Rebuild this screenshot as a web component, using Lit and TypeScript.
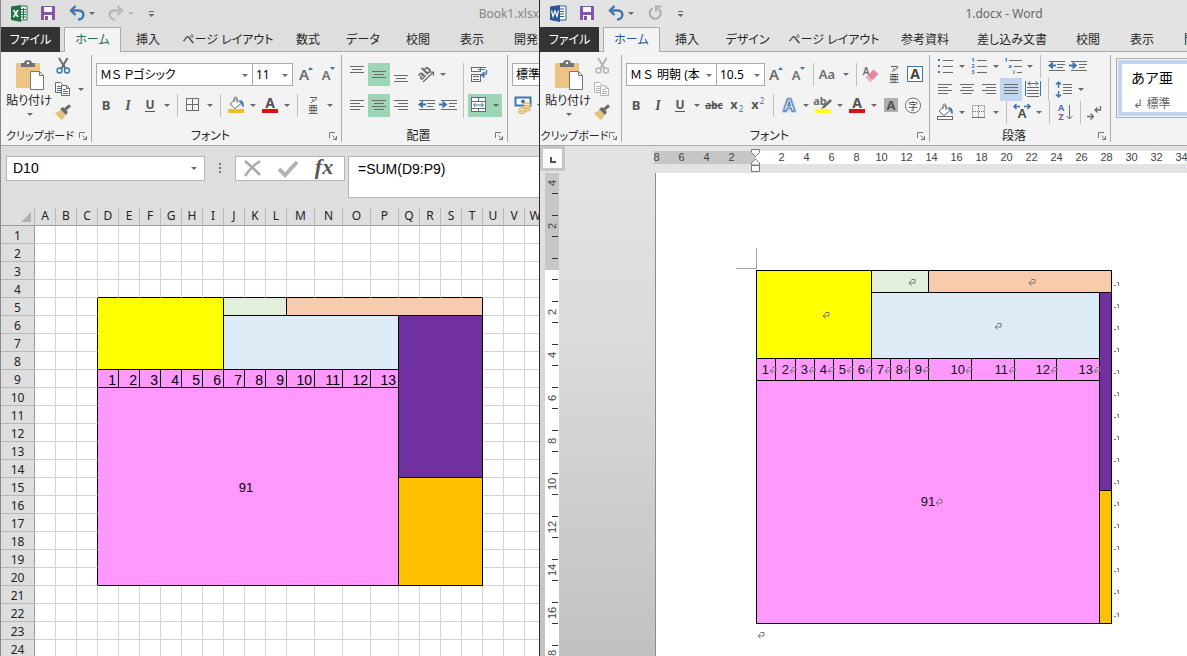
import { LitElement, html, svg, css, nothing } from "lit";
import { customElement } from "lit/decorators.js";
import { classMap } from "lit/directives/class-map.js";
import { styleMap } from "lit/directives/style-map.js";

const G = "#6b6b6b";
const B = "#3f75ad";

/* ---------- icon helpers ---------- */
const icon = (body: unknown, w = 22, h = 23) =>
  html`<svg width=${w} height=${h} viewBox="0 0 ${w} ${h}" fill="none" aria-hidden="true">${body}</svg>`;

const lines = (rows: [number, number, number][], color = G) =>
  rows.map(([x, y, w]) => svg`<rect x=${x} y=${y} width=${w} height="1" fill=${color} shape-rendering="crispEdges"/>`);

const caretShape = icon(svg`<path d="M3 10h6l-3 3z" fill="#6b6b6b"/>`, 12);

const tool = (label: string, body: unknown, extra = "") =>
  html`<button class="tool ${extra}" aria-label=${label}>${icon(body)}</button>`;
const caret = (label: string) => html`<button class="caret" aria-label=${label}>${caretShape}</button>`;
const sep = html`<span class="sep"></span>`;

const glyph = (t: string, size: number, x: number, y: number, color = G, extra = "") =>
  svg`<text x=${x} y=${y} font-size=${size} fill=${color} text-anchor="middle" class=${extra}>${t}</text>`;

const I = {
  top: lines([[4, 3, 14], [6, 6, 10], [4, 9, 14]]),
  middle: lines([[4, 8, 14], [6, 11, 10], [4, 14, 14]]),
  bottom: lines([[4, 12, 14], [6, 15, 10], [4, 18, 14]]),
  left: lines([[4, 6, 14], [4, 9, 10], [4, 12, 14], [4, 15, 10]]),
  center: lines([[4, 6, 14], [6, 9, 10], [4, 12, 14], [6, 15, 10]]),
  right: lines([[4, 6, 14], [8, 9, 10], [4, 12, 14], [8, 15, 10]]),
  justify: lines([[4, 6, 14], [4, 9, 14], [4, 12, 14], [4, 15, 14]]),
  distribute: svg`${lines([[5, 9, 12], [5, 12, 12], [5, 15, 12], [5, 18, 12]])}
    <path d="M3.500 3v15M18.500 3v15M6 5.500h10M8.500 3L6 5.500l2.500 2.500M13.500 3L16 5.500l-2.500 2.500" stroke=${B}/>`,
  dec: svg`${lines([[4, 6, 16], [12, 9, 8], [12, 12, 6], [4, 15, 16]])}
    <path d="M11 10.500H5" stroke=${B} stroke-width="2"/><path d="M8 6.500v8L3 10.500z" fill=${B}/>`,
  inc: svg`${lines([[4, 6, 16], [12, 9, 8], [12, 12, 6], [4, 15, 16]])}
    <path d="M2 10.500h5" stroke=${B} stroke-width="2"/><path d="M5.500 6.500v8l5-4z" fill=${B}/>`,
  orient: svg`<g transform="rotate(-45 9 11)">${glyph("ab", 12, 10, 14, G, "b")}</g>
    <path d="M8 19L18.500 9M14.500 9h4v4" stroke=${G} stroke-width="1.200"/>`,
  wrap: svg`<path d="M4 4.500h14" stroke=${G}/><rect x="3.500" y="4.500" width="9" height="4" stroke=${G}/>
    <rect x="3.500" y="11.500" width="9" height="7" stroke=${G}/><path d="M5 13.500h6M5 16.500h6" stroke=${G}/>
    <path d="M10 6.500h7" stroke=${B}/><path d="M18.500 7c.5 4-1 5-4 5M16.500 9l-3 3 3 2.500" stroke=${B} stroke-width="1.500"/>`,
  merge: svg`<rect x="3.500" y="3.500" width="14" height="14" fill="#fff" stroke=${G}/>
    <path d="M3.500 7.500h14M3.500 14.500h14M10.500 3.500v4M10.500 14.500v3" stroke=${G}/>
    <path d="M6 11h9M7.500 9L5.500 11l2 2M13.500 9l2 2-2 2" stroke=${B}/>`,
  borders: svg`<rect x="4.500" y="4.500" width="12" height="12" stroke=${G}/><path d="M10.500 5v12M5 10.500h12" stroke=${G}/>`,
  dotted: svg`<rect x="4.500" y="4.500" width="12" height="12" stroke=${G} stroke-dasharray="1 1"/>
    <path d="M10.500 5v12M5 10.500h12" stroke=${G} stroke-dasharray="1 1"/><path d="M4 16.500h13" stroke=${G}/>`,
  bucket: (c: string) => svg`<path d="M5 10L11 4.500l5 5-6 5z" fill="#fff" stroke=${G}/>
    <path d="M9 8V4.500a1.500 1.500 0 0 1 3 0V9" stroke=${G}/>
    <path d="M14 6c4 0 5.500 3 4.500 7.500-1.500-1-2-3-2.500-4.500z" fill=${B}/>
    <rect x="3.500" y="15.500" width="15" height="3" fill=${c} stroke=${c === "#fff" ? G : c}/>`,
  fontColor: svg`${glyph("A", 14, 11, 14, "#555", "b")}<rect x="3" y="15" width="16" height="4" fill="#e01010"/>`,
  hilite: svg`${glyph("ab", 11, 8, 11, G, "b")}<path d="M18 5l-7 7-2 3 3.500-1L20 7z" fill=${G}/>
    <rect x="3" y="15" width="16" height="4" fill="#ffff1a"/>`,
  ruby: svg`<path d="M8 3.500h6.500c0 2-1.500 3-3 4M11 5c0 2-.5 3-2 4" stroke="#555"/>${glyph("亜", 10, 11, 18.500, "#444")}`,
  grow: svg`${glyph("A", 15, 9, 17, G, "m")}<path d="M13 7h5l-2.500-3z" fill=${B}/>`,
  shrink: svg`${glyph("A", 13, 9, 17, G, "m")}<path d="M13 4h5l-2.500 3z" fill=${B}/>`,
  bold: glyph("B", 13, 11, 16, "#555", "b"),
  italic: glyph("I", 14, 11, 16, "#555", "i"),
  under: svg`${glyph("U", 12, 11, 15, "#555", "b")}<path d="M6 17.500h10" stroke="#555"/>`,
  strike: svg`${glyph("abc", 10, 11, 15, "#555", "b")}<path d="M2 11.500h18" stroke="#555"/>`,
  sub: svg`${glyph("x", 13, 9, 15, "#555", "b")}${glyph("2", 8, 16, 18, B)}`,
  sup: svg`${glyph("x", 13, 8, 15, "#555", "b")}${glyph("2", 8, 15, 10, B)}`,
  effects: svg`<text x="11" y="17" font-size="16" text-anchor="middle" class="b" fill="#fff" stroke="#a9cbee" stroke-width="3">A</text>
    <text x="11" y="17" font-size="16" text-anchor="middle" class="b" fill="#fff" stroke=${B} stroke-width="1">A</text>`,
  shade: svg`<rect x="4" y="4" width="14" height="14" fill="#b0b0b0"/>${glyph("A", 13, 11, 15.500, "#555", "b")}`,
  enclose: svg`<circle cx="11" cy="11.500" r="7.500" fill="#fff" stroke=${G}/>${glyph("字", 10, 11, 15.500, "#444")}`,
  caps: glyph("Aa", 13, 9, 16, G, "m"),
  eraser: svg`${glyph("A", 10, 5, 12, G, "m")}<path d="M4.500 14.500L12.500 6.500l5 4.500-8 8z" fill="#e2899b"/><path d="M4.500 14.500l5 4.500 2-2-5-4.500z" fill="#efb6c0"/>`,
  boxed: svg`<rect x="2.500" y="3.500" width="15" height="15" fill="#fff" stroke=${B}/>${glyph("A", 14, 10, 16, "#444", "b")}`,
  bullets: svg`<path d="M4 4h2v2H4zM4 10h2v2H4zM4 16h2v2H4z" fill=${B}/>${lines([[9, 5, 10], [9, 11, 10], [9, 17, 10]])}`,
  numbers: svg`${glyph("1", 6, 5, 7, B, "b")}${glyph("2", 6, 5, 13, B, "b")}${glyph("3", 6, 5, 19, B, "b")}${lines([[9, 5, 10], [9, 11, 10], [9, 17, 10]])}`,
  multi: svg`${glyph("1", 6, 4, 7, B, "b")}${glyph("a", 6, 8, 13, B, "b")}${glyph("i", 6, 12, 19, B, "b")}${lines([[7, 5, 13], [12, 11, 8], [15, 17, 5]])}`,
  spacing: svg`${lines([[10, 6, 9], [10, 9, 9], [10, 12, 9], [10, 15, 9]])}
    <path d="M5.500 4v6M5.500 13v6M3 6.500L5.500 4 8 6.500M3 16.500L5.500 19 8 16.500" stroke=${B} stroke-width="1.500"/>`,
  charScale: svg`${glyph("A", 13, 11, 17, "#444", "m")}<path d="M3 5.500h6M5.500 3L3 5.500 5.500 8M13 5.500h6M16.500 3L19 5.500 16.500 8" stroke=${B} stroke-width="1.500"/>`,
  sort: svg`${glyph("A", 9, 7, 10, B, "b")}${glyph("Z", 9, 7, 19, "#8455a3", "b")}<path d="M15.500 4v14M12.500 15l3 3 3-3" stroke=${G}/>`,
  marks: svg`<path d="M15.500 5v4H10M12.500 6.500L10 9l2.500 2.500M2 15.500h6M5.500 12.500l3 3-3 3" stroke=${G} stroke-width="1.300"/>`,
  cut: (c: string, d: string) => svg`<path d="M6 3l6.500 10.500M14.500 3L8.500 13.500" stroke=${d} stroke-width="2"/>
    <circle cx="6.500" cy="15.500" r="2.500" stroke=${c} stroke-width="1.400"/><circle cx="14" cy="15.500" r="2.500" stroke=${c} stroke-width="1.400"/>`,
  copy: (c: string, d: string) => svg`<path d="M2.500 4.500h5l2 2v8h-7z" fill="#fff" stroke=${d}/><path d="M4 8.500h4M4 10.500h4M4 12.500h4" stroke=${c}/>
    <path d="M8.500 7.500h5l3 3v7h-8z" fill="#fff" stroke=${d}/><path d="M13.500 7.500v3h3" stroke=${d}/><path d="M10 11.500h3M10 13.500h5M10 15.500h5" stroke=${c}/>`,
  brush: svg`<path d="M2 12l6-3 5 5-4 5c-1-1-2-1-2.500-2.500C4.500 16 3.500 14 2 12z" fill="#e8c07c"/>
    <path d="M7 8l3-2 5 5-2 3z" fill=${G}/><path d="M12 8.500l5-4" stroke=${G} stroke-width="3"/>`,
  money: svg`<rect x="3.500" y="3.500" width="15" height="8" fill="#fff" stroke=${B} stroke-width="2"/><circle cx="11" cy="7.500" r="2" fill=${B}/>
    <g fill="#f4e3c0" stroke="#d9a95a"><ellipse cx="15" cy="15.500" rx="3.500" ry="1.500"/><ellipse cx="15" cy="13" rx="3.500" ry="1.500"/><ellipse cx="15" cy="10.500" rx="3.500" ry="1.500"/><ellipse cx="10" cy="18" rx="3.500" ry="1.500"/><ellipse cx="10" cy="15.500" rx="3.500" ry="1.500"/></g>`,
};

const Q = {
  excel: icon(svg`<path d="M11 3h7v14h-7z" fill="#fff" stroke="#1f7244"/><path d="M12 6.500h5M12 9h5M12 11.500h5M12 14h5M14.500 5v11" stroke="#1f7244"/>
    <path d="M2 3.500L12 2v17L2 17z" fill="#1f7244"/><path d="M4.500 7l4.500 7M9 7l-4.500 7" stroke="#fff" stroke-width="1.600"/>`, 20, 21),
  word: icon(svg`<path d="M11 3h7v14h-7z" fill="#fff" stroke="#2a579a"/><path d="M12 6h4M12 8.500h4M12 11h4M12 13.500h4" stroke="#2a579a"/>
    <path d="M2 3.500L12 2v17L2 17z" fill="#2a579a"/><path d="M3.500 7.500l1.500 6L7 8l2 5.500 1.500-6" stroke="#fff" stroke-width="1.200"/>`, 20, 21),
  save: icon(svg`<path d="M3 3h14v14H3z" fill="#8455a3"/><path d="M6 4h8v5H6z" fill="#fff"/><path d="M6 12h8v5H6z" fill="#fff"/><path d="M7 13h3v4H7z" fill="#8455a3"/>`, 20, 21),
  undo: icon(svg`<path d="M5 7.500h7c6 0 6 9-1 9" stroke=${B} stroke-width="2.400"/><path d="M8.500 3L4 7.500 8.500 12" stroke=${B} stroke-width="2.400"/>`, 20, 21),
  redo: icon(svg`<path d="M15 7.500H8c-6 0-6 9 1 9" stroke="#b9b9b9" stroke-width="2.400"/><path d="M11.500 3L16 7.500 11.500 12" stroke="#b9b9b9" stroke-width="2.400"/>`, 20, 21),
  repeat: icon(svg`<path d="M7.500 5.500A5.500 5.500 0 1 0 13 5.500" stroke="#b0b0b0" stroke-width="2.200"/><path d="M11 8.500V3.500h5.500" stroke="#b0b0b0" stroke-width="2"/>`, 20, 21),
  caret: (c: string) => icon(svg`<path d="M2 9h6l-3 3z" fill=${c}/>`, 10, 21),
  custom: icon(svg`<path d="M4 8.500h5" stroke=${G}/><path d="M3.500 11h6l-3 3z" fill=${G}/>`, 12, 21),
};

const pasteIcon = icon(
  svg`<rect x="2" y="3" width="24" height="25" rx="1" fill="#ecc583"/><path d="M7 3h3c0-4 8-4 8 0h3v4H7z" fill="#737373"/><circle cx="14" cy="3" r="1.200" fill="#fff"/>
  <path d="M16.500 11.500h9l4 4v14h-13z" fill="#fff" stroke="#737373"/><path d="M25.500 11.500v4h4" stroke="#737373"/>`, 32, 31);

const launcher = html`<button class="launch" aria-label="詳細">${icon(
  svg`<path d="M.5 6V.5H6M3.500 3.500l4 4M7.500 4v3.500H4" stroke="#777"/>`, 8, 8)}</button>`;

const group = (cls: string, label: string, body: unknown) =>
  html`<section class="group ${cls}"><div class="body">${body}</div>
    <div class="foot"><span>${label}</span>${label ? launcher : nothing}</div></section>`;

const picker = (cls: string, label: string, value: string) =>
  html`<span class="picker ${cls}"><select aria-label=${label}><option>${value}</option></select><i>${caretShape}</i></span>`;

const clipboard = (cut: string, cutD: string, copy: string, copyD: string, withCaret: boolean) =>
  group("clip", "クリップボード", html`
    <button class="paste">${pasteIcon}<span>貼り付け</span>${icon(svg`<path d="M3 4h6l-3 3z" fill="#6b6b6b"/>`, 12, 9)}</button>
    <div class="rows tight">
      <div class="row">${tool("切り取り", I.cut(cut, cutD))}</div>
      <div class="row">${tool("コピー", I.copy(copy, copyD))}${withCaret ? caret("コピーのオプション") : nothing}</div>
      <div class="row">${tool("書式のコピー", I.brush)}</div>
    </div>`);

const tabStrip = (tabs: [string, number][]) =>
  html`<nav class="tabs"><button class="file">ファイル</button>${tabs.map(([t, w], i) =>
    html`<button class=${classMap({ tab: true, on: i === 0 })} style=${styleMap({ flexBasis: w + "px" })}>${t}</button>`)}</nav>`;

const chrome = css`
  * { box-sizing: border-box; }
  :host {
    display: flex; flex-direction: column; min-width: 0; min-height: 0; overflow: hidden;
    font: 12px/16px "Noto Sans", "Noto Sans CJK JP", sans-serif; color: #262626;
    font-feature-settings: "palt";
  }
  svg { display: block; flex: none; font-family: "Noto Sans", "Noto Sans CJK JP", sans-serif; }
  svg .b { font-weight: 700; }
  svg .m { font-weight: 600; }
  svg .i { font-weight: 700; font-style: italic; font-family: "Liberation Serif", serif; }
  button, select, input { font: inherit; color: inherit; font-feature-settings: inherit; border: 0; padding: 0; margin: 0; background: none; border-radius: 0; }
  button { display: flex; align-items: center; justify-content: center; white-space: nowrap; flex: none; }
  .title { display: flex; align-items: center; flex: none; height: 27px; padding-left: 8px; gap: 9px; }
  .title .pair { display: flex; }
  .title h1 { flex: 1; margin: 0; font-size: 12px; font-weight: 400; white-space: nowrap; }
  .tabs { display: flex; flex: none; height: 25px; box-shadow: inset 0 -1px #ababab; overflow: hidden; }
  .file { width: 59px; background: #333; color: #fff; margin-right: 4px; }
  .tab { flex: none; }
  .tab.on { background: #f3f3f3; border: 1px solid #ababab; border-bottom: 0; color: var(--accent); }
  .ribbon { display: flex; flex: none; height: 94px; padding: 3px 0; background: #f3f3f3; border-bottom: 1px solid #ababab; overflow: hidden; }
  .group { display: flex; flex-direction: column; flex: none; border-right: 1px solid #ababab; }
  .body { display: flex; flex: 1; padding-left: 4px; }
  .foot { display: flex; align-items: center; height: 13px; line-height: 13px; flex: none; }
  .foot span { flex: 1; text-align: center; white-space: nowrap; }
  .clip .foot { font-size: 11px; }
  .launch { width: 8px; margin-right: 4px; }
  .rows { display: flex; flex-direction: column; gap: 8px; padding-top: 8px; }
  .rows.tight { gap: 0; padding-top: 0; }
  .row { display: flex; height: 23px; }
  .tool { width: 22px; height: 23px; }
  .caret { width: 12px; height: 23px; }
  .sep { flex: none; width: 1px; margin: 0 4px; background: #c0c0c0; }
  .paste { flex-direction: column; justify-content: flex-start; width: 48px; padding-top: 5px; }
  .paste span { margin-top: 2px; }
  .paste svg { margin-left: 2px; }
  .picker { position: relative; display: flex; flex: none; height: 23px; background: #fff; border: 1px solid #ababab; }
  .picker select { appearance: none; width: 100%; padding: 0 12px 0 3px; color: #000; }
  .picker i { position: absolute; right: 1px; top: 0; pointer-events: none; }
`;

/* ---------- shared block colours for both grids ---------- */
const fills = css`
  .yellow { background: #ffff00; }
  .green { background: #e2efda; }
  .peach { background: #f8cbad; }
  .blue { background: #ddebf7; }
  .purple { background: #7030a0; }
  .pink { background: #ff99ff; }
  .orange { background: #ffc000; }
`;

interface Block { row: number; col: number; rows: number; cols: number; fill: string; text?: string; }

const sheetBlocks: Block[] = [
  { row: 5, col: 4, rows: 4, cols: 6, fill: "yellow" },
  { row: 5, col: 10, rows: 1, cols: 3, fill: "green" },
  { row: 5, col: 13, rows: 1, cols: 8, fill: "peach" },
  { row: 6, col: 10, rows: 3, cols: 7, fill: "blue" },
  { row: 6, col: 17, rows: 9, cols: 4, fill: "purple" },
  { row: 10, col: 4, rows: 11, cols: 13, fill: "pink", text: "91" },
  { row: 15, col: 17, rows: 6, cols: 4, fill: "orange" },
  ...Array.from({ length: 13 }, (_, i) => ({ row: 9, col: 4 + i, rows: 1, cols: 1, fill: "pink", text: String(i + 1) })),
];

const docBlocks: Block[] = [
  { row: 1, col: 1, rows: 4, cols: 6, fill: "yellow" },
  { row: 1, col: 7, rows: 1, cols: 3, fill: "green" },
  { row: 1, col: 10, rows: 1, cols: 5, fill: "peach" },
  { row: 2, col: 7, rows: 3, cols: 7, fill: "blue" },
  { row: 2, col: 14, rows: 9, cols: 1, fill: "purple" },
  { row: 6, col: 1, rows: 11, cols: 13, fill: "pink", text: "91" },
  { row: 11, col: 14, rows: 6, cols: 1, fill: "orange" },
  ...Array.from({ length: 13 }, (_, i) => ({ row: 5, col: 1 + i, rows: 1, cols: 1, fill: "pink", text: String(i + 1) })),
];

@customElement("sheet-window")
export class SheetWindow extends LitElement {
  static styles = [chrome, fills, css`
    :host { --accent: #217346; background: #dedede; border-left: 1px solid #8a8a8a; }
    h1 { color: #858585; text-align: right; }
    .clip { width: 91px; }
    .font { width: 250px; }
    .font .body { padding-left: 3px; }
    .align { width: 166px; }
    .number { width: 120px; }
    .name { width: 157px; margin-left: 1px; }
    .size { width: 40px; border-left: 0; margin-right: 2px; }
    .std { width: 100px; }
    .gap { width: 3px; }
    .hot { background: #9fd5b7; }
    .hotpair { display: flex; background: #9fd5b7; }
    .tall { margin-top: 8px; height: 55px; margin-left: 4px; }
    .bar { display: flex; align-items: flex-start; flex: none; height: 62px; padding: 10px 0 0 5px; }
    .namebox { display: flex; width: 199px; height: 25px; background: #fff; border: 1px solid #b5b5b5; font: 14px/16px "Liberation Sans", sans-serif; }
    .namebox input { flex: 1; min-width: 0; padding-left: 6px; padding-bottom: 1px; color: #000; }
    .namebox button { width: 20px; }
    .dots { width: 30px; }
    .entry { display: flex; justify-content: space-around; width: 110px; height: 25px; background: #fff; border: 1px solid #b5b5b5; margin-right: 3px; }
    .formula { flex: 1; min-width: 0; height: 42px; background: #fff; border: 1px solid #b5b5b5; border-right: 0; padding: 3px 0 0 9px; }
    .formula input { width: 100%; height: 17px; display: block; font: 14px/16px "Liberation Sans", sans-serif; color: #000; }
    .view { flex: 1; min-height: 0; overflow: hidden; background: #fff; }
    table { table-layout: fixed; border-spacing: 0; width: 0; }
    th, td { height: 18px; padding: 0; line-height: 16px; white-space: nowrap; overflow: hidden; }
    th { font-weight: 400; background: #dedede; color: #222; text-align: center; }
    thead th { border-right: 1px solid #b8b8b8; border-bottom: 1px solid #9b9b9b; line-height: 14px; padding-bottom: 1px; }
    tbody th { border-right: 1px solid #9b9b9b; border-bottom: 1px solid #b8b8b8; line-height: 14px; padding-top: 3px; }
    td { border-right: 1px solid #d4d4d4; border-bottom: 1px solid #d4d4d4; }
    td.kr { border-right-color: #000; }
    td.kb { border-bottom-color: #000; }
    td.block { border-color: #000; color: #000; font: 14px/16px "Liberation Sans", sans-serif; text-align: center; }
    td.num { text-align: right; padding: 2px 2px 0 0; line-height: 14px; }
    td.total { font-size: 13px; padding: 2px 4px 0 0; }
    .corner svg { margin-left: 18px; }
  `];

  private widths = Array.from({ length: 23 }, (_, i) => (i >= 12 && i <= 15 ? 28 : 21));

  private cell(r: number, c: number) {
    const b = sheetBlocks.find((k) => r >= k.row && r < k.row + k.rows && c >= k.col && c < k.col + k.cols);
    if (b) {
      if (b.row !== r || b.col !== c) return nothing;
      const cls = { block: true, [b.fill]: true, num: b.row === 9, total: b.text === "91" };
      return html`<td class=${classMap(cls)} rowspan=${b.rows} colspan=${b.cols}>${b.text ?? ""}</td>`;
    }
    return html`<td class=${classMap({ kr: c === 3 && r >= 5 && r <= 20, kb: r === 4 && c >= 4 && c <= 20 })}></td>`;
  }

  render() {
    return html`
      <header class="title">
        ${Q.excel}<button aria-label="上書き保存">${Q.save}</button>
        <span class="pair"><button aria-label="元に戻す">${Q.undo}</button>${Q.caret(G)}</span>
        <span class="pair"><button aria-label="やり直し">${Q.redo}</button>${Q.caret("#b9b9b9")}</span>
        ${Q.custom}<h1>Book1.xlsx</h1>
      </header>
      ${tabStrip([["ホーム", 57], ["挿入", 54], ["ページ レイアウト", 106], ["数式", 54], ["データ", 56], ["校閲", 54], ["表示", 54], ["開発", 54]])}
      <div class="ribbon">
        ${clipboard(B, G, B, G, true)}
        ${group("font", "フォント", html`<div class="rows">
          <div class="row">${picker("name", "フォント", "ＭＳ Ｐゴシック")}${picker("size", "サイズ", "11")}${tool("拡大", I.grow)}${tool("縮小", I.shrink)}</div>
          <div class="row">${tool("太字", I.bold)}${tool("斜体", I.italic)}${tool("下線", I.under)}${caret("下線の種類")}${sep}
            ${tool("罫線", I.borders)}${caret("罫線の種類")}${sep}${tool("塗りつぶし", I.bucket("#f2bd2c"))}${caret("塗りつぶしの色")}
            ${tool("文字色", I.fontColor)}${caret("文字の色")}${sep}${tool("ふりがな", I.ruby)}${caret("ふりがな設定")}</div>
        </div>`)}
        ${group("align", "配置", html`<div class="rows">
          <div class="row">${tool("上揃え", I.top)}${tool("上下中央", I.middle, "hot")}${tool("下揃え", I.bottom)}<span class="gap"></span>${tool("方向", I.orient)}${caret("方向の種類")}</div>
          <div class="row">${tool("左揃え", I.left)}${tool("中央揃え", I.center, "hot")}${tool("右揃え", I.right)}<span class="gap"></span>${tool("インデント減", I.dec)}${tool("インデント増", I.inc)}</div>
        </div><span class="sep tall"></span><div class="rows">
          <div class="row">${tool("折り返し", I.wrap)}</div>
          <div class="row"><span class="hotpair">${tool("結合", I.merge)}${caret("結合の種類")}</span></div>
        </div>`)}
        ${group("number", "", html`<div class="rows">
          <div class="row">${picker("std", "表示形式", "標準")}</div>
          <div class="row">${tool("通貨", I.money)}${caret("通貨の種類")}</div></div>`)}
      </div>
      <div class="bar">
        <div class="namebox"><input aria-label="名前ボックス" value="D10" /><button aria-label="名前の一覧">${caretShape}</button></div>
        <span class="dots">${icon(svg`<path d="M14 7h2v2h-2zM14 11h2v2h-2zM14 15h2v2h-2z" fill="#777"/>`, 30, 23)}</span>
        <div class="entry">
          <button aria-label="キャンセル">${icon(svg`<path d="M3 4c5 4 9 8 15 14M18 4C12 8 7 13 3 19" stroke="#a9a9a9" stroke-width="2.600"/>`)}</button>
          <button aria-label="入力">${icon(svg`<path d="M2 12l6 6L20 5" stroke="#b3b3b3" stroke-width="4"/>`)}</button>
          <button aria-label="関数の挿入">${icon(svg`<text x="12" y="17" font-size="22" text-anchor="middle" font-family="Liberation Serif" font-style="italic" font-weight="700" fill="#555">fx</text>`, 26)}</button>
        </div>
        <div class="formula"><input aria-label="数式バー" value="=SUM(D9:P9)" /></div>
      </div>
      <div class="view"><table>
        <colgroup><col style=${styleMap({ width: "34px" })} />${this.widths.map((w) => html`<col style=${styleMap({ width: w + "px" })} />`)}</colgroup>
        <thead><tr><th class="corner">${icon(svg`<path d="M12 3v10H2z" fill="#b0b0b0"/>`, 14, 14)}</th>
          ${this.widths.map((_, i) => html`<th>${String.fromCharCode(65 + i)}</th>`)}</tr></thead>
        <tbody>${Array.from({ length: 24 }, (_, r) => html`<tr><th>${r + 1}</th>${this.widths.map((_, c) => this.cell(r + 1, c + 1))}</tr>`)}</tbody>
      </table></div>`;
  }
}

@customElement("doc-window")
export class DocWindow extends LitElement {
  static styles = [chrome, fills, css`
    :host { --accent: #2a579a; background: #e3e3e3; border-left: 1px solid #2b2b2b; }
    h1 { color: #666; text-align: center; padding-left: 126px; }
    .clip { width: 82px; }
    .font { width: 308px; }
    .font .body { padding-left: 3px; }
    .para { width: 181px; }
    .styles { width: 120px; }
    .name { width: 91px; margin-left: 1px; font-feature-settings: normal; }
    .size { width: 48px; border-left: 0; }
    .hot { background: #c2d5f0; }
    .card { display: flex; flex-direction: column; justify-content: center; width: 84px; height: 60px; margin: 3px 0 0 1px; padding: 1px; border: 1px solid #ababab; }
    .card span { display: flex; flex-direction: column; align-items: center; justify-content: space-between; flex: 1; width: 100%; padding: 6px 12px 0 0; border: 4px solid #c2d5f0; background: #fff; color: #666; }
    .card b { font-weight: 400; font-size: 14px; color: #000; font-feature-settings: normal; }
    .work { display: grid; grid-template: 27px minmax(0, 1fr) / 25px minmax(0, 1fr); flex: 1; min-height: 0; background: linear-gradient(#e4e4e4, #dadada 40%, #c1c1c1); }
    .stop { width: 25px; height: 25px; border: 3px solid #c6c6c6; background: #fcfcfc; }
    .top { position: relative; background: #e3e3e3; padding-top: 5px; overflow: hidden; }
    .hr { display: flex; height: 13px; margin-left: 79px; font: 11px/13px "Liberation Sans", sans-serif; color: #444; background: linear-gradient(90deg, #e3e3e3 10px, #c6c6c6 10px 112px, #fff 112px); }
    .hr span { flex: 0 0 25px; text-align: center; }
    .handle { position: absolute; left: 185px; top: 2px; }
    .vr { display: flex; flex-direction: column; width: 14px; margin-left: 5px; overflow: hidden; font: 11px/13px "Liberation Sans", sans-serif; color: #444; background: linear-gradient(#c6c6c6 97px, #fff 97px); }
    .mark { display: flex; flex-direction: column; align-items: center; justify-content: center; flex: none; height: 43px; }
    .mark:first-child { margin-top: -12px; }
    .mark span { display: grid; place-items: center; height: 20px; writing-mode: vertical-rl; transform: rotate(180deg); }
    .mark::before, .mark::after { content: ""; width: 6px; height: 1px; background: #333; margin-left: 5px; }
    .page { margin-left: 90px; background: #fff; border-left: 1px solid #8c8c8c; padding: 75px 0 0 80px; overflow: hidden; }
    .cornermark { width: 21px; height: 21px; border: solid #a6a6a6; border-width: 0 1px 1px 0; }
    .sheet { padding: 1px 0 0 20px; }
    table { table-layout: fixed; border-spacing: 0; width: 0; font: 13px/16px "Liberation Sans", sans-serif; color: #111; }
    td { height: 22px; padding: 0; border: solid #000; border-width: 0 1px 1px 0; text-align: center; white-space: nowrap; }
    td svg { display: inline-block; vertical-align: 0; margin-right: -8px; }
    td.first { border-left-width: 1px; }
    tr:first-child td { height: 23px; border-top-width: 1px; }
    tr:last-child td { height: 23px; }
    td.num { text-align: right; }
    td.num svg { margin: 0 -2px 0 0; }
    td.end, tr:first-child td.end { border-width: 0; padding: 2px 0 0 2px; text-align: left; line-height: 12px; }
    td.end svg { margin: 0; }
    .blank { display: inline-block; width: 16px; }
    .pilcrow { padding: 7px 0 0 1px; }
  `];

  private cols = [20, 20, 19, 19, 19, 19, 19, 19, 19, 43, 43, 42, 43, 12, 14];
  private ret = icon(svg`<path d="M3.500 1.500h3.500v3.500H1M3.500 2.500L1 5l2.500 2.500" stroke="#777"/>`, 8, 8);
  private endMark = icon(svg`<path d="M0 4.500h2M3 1.500h1.500V5" stroke="#777"/>`, 6, 6);

  private cell(r: number, c: number) {
    const b = docBlocks.find((k) => k.row === r && k.col === c);
    if (!b) return nothing;
    const narrow = b.col === 14;
    const cls = { [b.fill]: true, num: b.row === 5, first: b.col === 1 };
    return html`<td class=${classMap(cls)} rowspan=${b.rows} colspan=${b.cols}>${narrow ? nothing : html`${b.text ?? html`<span class="blank"></span>`}${this.ret}`}</td>`;
  }

  render() {
    const across = Array.from({ length: 22 }, (_, i) => Math.abs(i * 2 - 8));
    const down = Array.from({ length: 12 }, (_, i) => Math.abs(i * 2 - 4));
    return html`
      <header class="title">
        ${Q.word}<button aria-label="上書き保存">${Q.save}</button>
        <span class="pair"><button aria-label="元に戻す">${Q.undo}</button>${Q.caret(G)}</span>
        <button aria-label="繰り返し">${Q.repeat}</button>${Q.custom}<h1>1.docx - Word</h1>
      </header>
      ${tabStrip([["ホーム", 57], ["挿入", 54], ["デザイン", 67], ["ページ レイアウト", 106], ["参考資料", 76], ["差し込み文書", 98], ["校閲", 54], ["表示", 54], ["開発", 54]])}
      <div class="ribbon">
        ${clipboard("#b5b5b5", "#b5b5b5", "#b9b0bd", "#b5b5b5", false)}
        ${group("font", "フォント", html`<div class="rows">
          <div class="row">${picker("name", "フォント", "ＭＳ 明朝 (本")}${picker("size", "サイズ", "10.5")}${tool("拡大", I.grow)}${tool("縮小", I.shrink)}${sep}
            ${tool("文字種の変換", I.caps)}${caret("文字種")}${sep}${tool("書式のクリア", I.eraser)}${tool("ルビ", I.ruby)}${tool("囲み線", I.boxed)}</div>
          <div class="row">${tool("太字", I.bold)}${tool("斜体", I.italic)}${tool("下線", I.under)}${caret("下線の種類")}${tool("取り消し線", I.strike)}${tool("下付き", I.sub)}${tool("上付き", I.sup)}${sep}
            ${tool("文字の効果", I.effects)}${caret("効果の種類")}${tool("蛍光ペン", I.hilite)}${caret("蛍光ペンの色")}${tool("文字色", I.fontColor)}${caret("文字の色")}${tool("網かけ", I.shade)}${tool("囲い文字", I.enclose)}</div>
        </div>`)}
        ${group("para", "段落", html`<div class="rows tight">
          <div class="row">${tool("箇条書き", I.bullets)}${caret("行頭文字")}${tool("段落番号", I.numbers)}${caret("番号の種類")}${tool("アウトライン", I.multi)}${caret("リストの種類")}${sep}${tool("インデント減", I.dec)}${tool("インデント増", I.inc)}</div>
          <div class="row">${tool("左揃え", I.left)}${tool("中央揃え", I.center)}${tool("右揃え", I.right)}${tool("両端揃え", I.justify, "hot")}${tool("均等割り付け", I.distribute)}${sep}${tool("行間", I.spacing)}${caret("行間の種類")}</div>
          <div class="row">${tool("塗りつぶし", I.bucket("#fff"))}${caret("塗りつぶしの色")}${tool("罫線", I.dotted)}${caret("罫線の種類")}${sep}${tool("拡張書式", I.charScale)}${caret("書式の種類")}${sep}${tool("並べ替え", I.sort)}${sep}${tool("編集記号", I.marks)}</div>
        </div>`)}
        ${group("styles", "", html`<button class="card"><span><b>あア亜</b>↲ 標準</span></button>`)}
      </div>
      <div class="work">
        <button class="stop" aria-label="タブ">${icon(svg`<path d="M8 8v5h5" stroke="#555" stroke-width="2"/>`, 19, 19)}</button>
        <div class="top">
          <div class="hr">${across.map((n) => html`<span>${n || ""}</span>`)}</div>
          <span class="handle">${icon(svg`<path d="M1.500 1.500h8v3l-4 4-4-4zM5.500 11l4 4v2h-8v-2zM1.500 17.500h8v6h-8z" fill="#fff" stroke="#777"/>`, 11, 25)}</span>
        </div>
        <div class="vr">${down.map((n) => html`<div class="mark"><span>${n || ""}</span></div>`)}</div>
        <div class="page">
          <div class="cornermark"></div>
          <div class="sheet"><table>
            <colgroup>${this.cols.map((w) => html`<col style=${styleMap({ width: w + "px" })} />`)}</colgroup>
            <tbody>${Array.from({ length: 16 }, (_, r) => html`<tr>${this.cols.slice(0, 14).map((_, c) => this.cell(r + 1, c + 1))}<td class="end">${this.endMark}</td></tr>`)}</tbody>
          </table>
          <div class="pilcrow">${this.ret}</div></div>
        </div>
      </div>`;
  }
}

@customElement("app-root")
export class AppRoot extends LitElement {
  static styles = css`
    :host { display: grid; grid-template: minmax(0, 1fr) / minmax(0, 539fr) minmax(0, 648fr); height: 100vh; overflow: hidden; }
  `;
  render() {
    return html`<sheet-window></sheet-window><doc-window></doc-window>`;
  }
}
